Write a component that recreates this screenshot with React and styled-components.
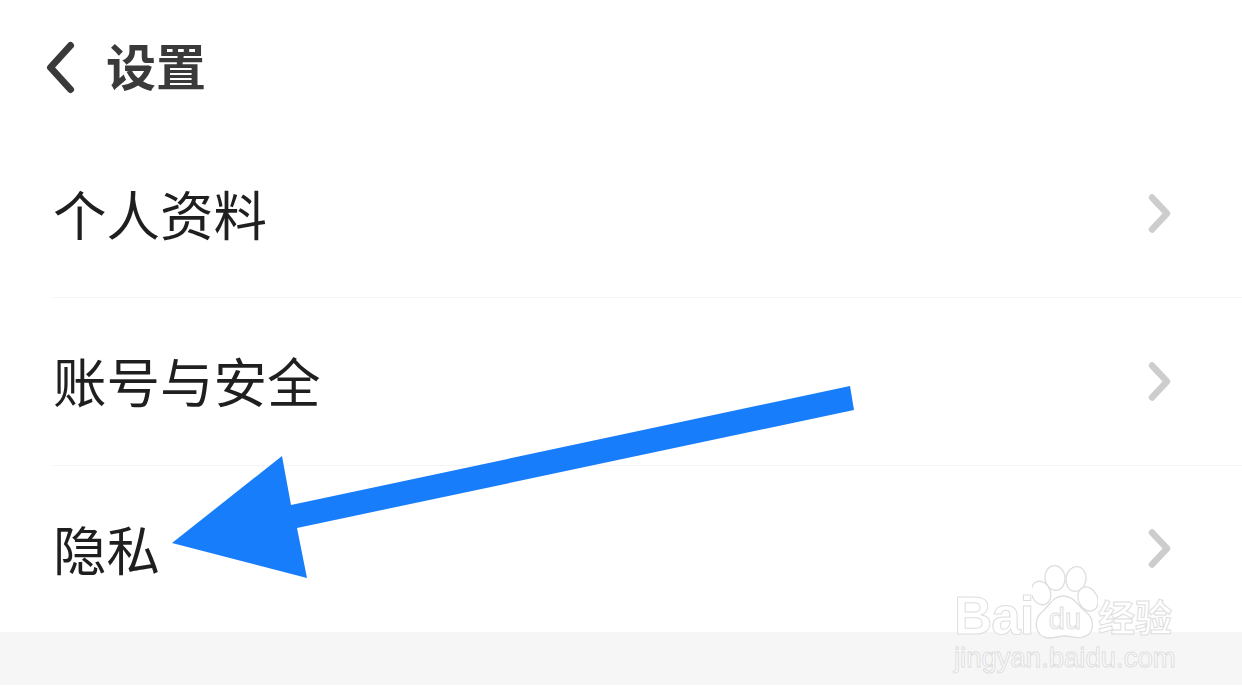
import React from "react";
import styled, { createGlobalStyle } from "styled-components";

const GlobalStyle = createGlobalStyle`
  html, body {
    margin: 0;
    padding: 0;
    background: #fff;
  }
`;

const Page = styled.div`
  position: relative;
  width: 1242px;
  height: 700px;
  overflow: hidden;
  background: #fff;
  font-family: "Noto Sans CJK SC", "Noto Sans", sans-serif;
`;

const Header = styled.header`
  display: flex;
  align-items: center;
  gap: 29px;
  height: 131px;
  padding-left: 45px;
  box-sizing: border-box;
`;

const Title = styled.h1`
  margin: 0 0 4px;
  font-weight: 700;
  font-size: 50px;
  line-height: 1;
  color: #3a3a3a;
`;

const List = styled.div`
  display: grid;
  grid-template-rows: 167px 168px 166px;
  padding-left: 53px;
`;

const Row = styled.div`
  display: flex;
  align-items: center;
  justify-content: space-between;
  padding-right: 70px;
  box-sizing: border-box;
  border-bottom: 1px solid #f4f4f4;

  &:last-child {
    border-bottom: none;
  }
`;

const RowLabel = styled.span`
  margin-bottom: 3px;
  font-size: 53.5px;
  line-height: 1;
  color: #1f1f1f;
`;

const Band = styled.div`
  height: 53px;
  background: #f6f6f6;
`;

const ArrowLayer = styled.svg`
  position: absolute;
  left: 0;
  top: 0;
`;

const Watermark = styled.div`
  position: absolute;
  left: 954px;
  top: 565px;
  display: flex;
  flex-direction: column;
  gap: 3px;
  width: 224px;
  color: #fff;
  -webkit-text-stroke: 1px #dedede;
  font-family: "Liberation Sans", sans-serif;
`;

const LogoRow = styled.div`
  display: flex;
  align-items: flex-end;
  height: 74px;
`;

const LogoLetters = styled.span`
  width: 78px;
  font-size: 53px;
  font-weight: 700;
  letter-spacing: -1px;
  line-height: 46px;
`;

const PawBox = styled.div`
  position: relative;
  flex: none;
  width: 66px;
  height: 74px;
`;

const PawSvg = styled.svg`
  display: block;
`;

const PawLabel = styled.span`
  position: absolute;
  left: 0;
  right: 0;
  bottom: 5px;
  text-align: center;
  font-size: 29px;
  line-height: 1;
`;

const LogoCjk = styled.span`
  font-family: "Noto Sans CJK SC", sans-serif;
  font-size: 37px;
  font-weight: 700;
  line-height: 46px;
  white-space: nowrap;
`;

const Domain = styled.span`
  font-size: 27.5px;
  line-height: 32px;
  white-space: nowrap;
`;

const BackIcon = () => (
  <svg width="32" height="60" viewBox="0 0 32 60" fill="none">
    <path
      d="M25.5 9.5 L5.5 31.5 L25.5 53.5"
      stroke="#3a3a3a"
      strokeWidth="7"
      strokeLinecap="round"
      strokeLinejoin="round"
    />
  </svg>
);

const Chevron = () => (
  <svg width="24" height="40" viewBox="0 0 24 40" fill="none">
    <path
      d="M4 3.5 L19 19.5 L4 35.5"
      stroke="#cdcdcd"
      strokeWidth="6.5"
      strokeLinecap="round"
      strokeLinejoin="round"
    />
  </svg>
);

const Paw = () => (
  <PawSvg width="66" height="74" viewBox="0 0 66 74" fill="none">
    <g fill="#fff" stroke="#dedede" strokeWidth="1.3">
      <ellipse cx="23" cy="13" rx="10" ry="12.5" transform="rotate(-6 23 13)" />
      <ellipse cx="44" cy="14" rx="10" ry="12.5" transform="rotate(8 44 14)" />
      <ellipse cx="9" cy="28" rx="9.5" ry="12" transform="rotate(-20 9 28)" />
      <ellipse cx="56" cy="34" rx="9.5" ry="12.5" transform="rotate(-25 56 34)" />
      <path d="M31 31 C21 31 17 41 10 47 C1 54 2 72 17 73 C23 73 27 71 33 71 C39 71 45 74 51 72 C63 69 63 54 54 47 C46 41 42 31 31 31 Z" />
    </g>
  </PawSvg>
);

const rows = ["个人资料", "账号与安全", "隐私"];

export default function App() {
  return (
    <>
      <GlobalStyle />
      <Page>
        <Header>
          <BackIcon />
          <Title>设置</Title>
        </Header>
        <List>
          {rows.map((label) => (
            <Row key={label}>
              <RowLabel>{label}</RowLabel>
              <Chevron />
            </Row>
          ))}
        </List>
        <Band />
        <ArrowLayer width="1242" height="700" viewBox="0 0 1242 700">
          <path
            d="M172 543 L282 456 L291 505 L850 386 L854 410 L297 528 L307 578 Z"
            fill="#187dfa"
          />
        </ArrowLayer>
        <Watermark>
          <LogoRow>
            <LogoLetters>Bai</LogoLetters>
            <PawBox>
              <Paw />
              <PawLabel>du</PawLabel>
            </PawBox>
            <LogoCjk>经验</LogoCjk>
          </LogoRow>
          <Domain>jingyan.baidu.com</Domain>
        </Watermark>
      </Page>
    </>
  );
}
